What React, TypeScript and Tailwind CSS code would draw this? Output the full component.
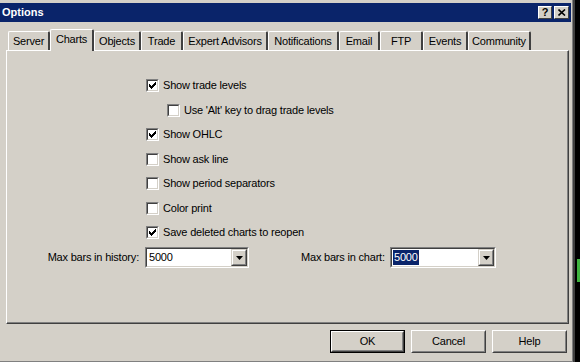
import { useState } from 'react';

const TABS = [
  { label: 'Server', w: 'w-[42px]' },
  { label: 'Charts', w: 'w-[44px]' },
  { label: 'Objects', w: 'w-[47px]' },
  { label: 'Trade', w: 'w-[42px]' },
  { label: 'Expert Advisors', w: 'w-[85px]' },
  { label: 'Notifications', w: 'w-[71px]' },
  { label: 'Email', w: 'w-[41px]' },
  { label: 'FTP', w: 'w-[43px]' },
  { label: 'Events', w: 'w-[45px]' },
  { label: 'Community', w: 'w-[63px]' },
];

const OPTIONS = [
  { id: 'levels', label: 'Show trade levels', checked: true, indent: false },
  { id: 'alt', label: "Use 'Alt' key to drag trade levels", checked: false, indent: true },
  { id: 'ohlc', label: 'Show OHLC', checked: true, indent: false },
  { id: 'ask', label: 'Show ask line', checked: false, indent: false },
  { id: 'sep', label: 'Show period separators', checked: false, indent: false },
  { id: 'color', label: 'Color print', checked: false, indent: false },
  { id: 'save', label: 'Save deleted charts to reopen', checked: true, indent: false },
];

function Checkbox({ checked, onClick }: { checked: boolean; onClick: () => void }) {
  return (
    <button
      onClick={onClick}
      className="w-[13px] h-[13px] shrink-0 border border-t-[#808080] border-l-[#808080] border-b-white border-r-white"
    >
      <div className="w-full h-full bg-white border border-t-[#404040] border-l-[#404040] border-b-[#d4d0c8] border-r-[#d4d0c8] flex items-center justify-center">
        {checked && (
          <svg width="7" height="7" viewBox="0 0 7 7" className="block">
            <path d="M0 2h1v1h1v1h1v-1h1v-1h1v-1h1v-1h1v3h-1v1h-1v1h-1v1h-1v1h-1v-1h-1v-1h-1z" fill="#000" />
          </svg>
        )}
      </div>
    </button>
  );
}

function Combo({ width, selected }: { width: string; selected?: boolean }) {
  return (
    <div className={`${width} h-[21px] border border-t-[#808080] border-l-[#808080] border-b-white border-r-white`}>
      <div className="h-full bg-white border border-t-[#404040] border-l-[#404040] border-b-[#d4d0c8] border-r-[#d4d0c8] flex items-center">
        <div className="flex-1 pl-[1px] flex items-center">
          <span className={`px-[1px] leading-[15px] ${selected ? 'bg-[#0a246a] text-white' : ''}`}>5000</span>
        </div>
        <div className="w-[16px] h-full bg-[#d4d0c8] border border-t-[#d4d0c8] border-l-[#d4d0c8] border-b-[#404040] border-r-[#404040]">
          <div className="w-full h-full border border-t-white border-l-white border-b-[#808080] border-r-[#808080] flex items-center justify-center">
            <svg width="7" height="4" viewBox="0 0 7 4" className="block">
              <path d="M0 0h7L3.5 4z" fill="#000" />
            </svg>
          </div>
        </div>
      </div>
    </div>
  );
}

function DialogButton({ label, isDefault }: { label: string; isDefault?: boolean }) {
  return (
    <div className={`w-[75px] h-[23px] ${isDefault ? 'border border-black' : ''}`}>
      <div className="w-full h-full border border-t-white border-l-white border-b-[#404040] border-r-[#404040]">
        <div className="w-full h-full border border-t-[#d4d0c8] border-l-[#d4d0c8] border-b-[#808080] border-r-[#808080] flex items-center justify-center">
          {label}
        </div>
      </div>
    </div>
  );
}

export default function App() {
  const [checks, setChecks] = useState<Record<string, boolean>>(
    Object.fromEntries(OPTIONS.map((o) => [o.id, o.checked]))
  );
  const [activeTab, setActiveTab] = useState('Charts');

  return (
    <div className="w-[580px] h-[362px] bg-black flex text-[11px] tracking-[-0.2px] text-black overflow-hidden" style={{ fontFamily: '"Liberation Sans", Arial, sans-serif' }}>
      {/* Window */}
      <div className="w-[575px] h-[362px] bg-[#d4d0c8] border-r-2 border-r-[#404040] flex flex-col">
        <div className="h-full border-r border-r-[#808080] border-b border-b-[#808080] pr-[1px] pt-[3px] flex flex-col">
          {/* Title bar */}
          <div className="h-[19px] bg-[#0a246a] flex items-center justify-between pl-[2px] pr-[2px]">
            <span className="text-white font-bold text-[11px] tracking-normal">Options</span>
            <div className="flex items-center gap-[2px]">
              <div className="w-[14px] h-[13px] bg-[#d4d0c8] border border-t-white border-l-white border-b-[#404040] border-r-[#404040] flex items-center justify-center font-bold text-[11px] leading-none">
                ?
              </div>
              <div className="w-[15px] h-[13px] bg-[#d4d0c8] border border-t-white border-l-white border-b-[#404040] border-r-[#404040] flex items-center justify-center">
                <svg width="8" height="7" viewBox="0 0 8 7" className="block">
                  <path d="M0.5 0.5L7 6.5M7 0.5L0.5 6.5" stroke="#000" strokeWidth="1.6" />
                </svg>
              </div>
            </div>
          </div>

          {/* Tabs */}
          <div className="flex items-end pl-[8px] mt-[7px] h-[21px] relative z-10">
            {TABS.map((t) => {
              const active = t.label === activeTab;
              return (
                <button
                  key={t.label}
                  onClick={() => setActiveTab(t.label)}
                  className={`${t.w} shrink-0 bg-[#d4d0c8] border-t border-l border-t-white border-l-white border-r-2 border-r-[#404040] rounded-tl-[2px] rounded-tr-[2px] flex items-start justify-center whitespace-nowrap leading-[13px] pt-[3px] ${
                    active ? 'h-[22px] -mb-[1px]' : 'h-[19px]'
                  }`}
                >
                  {t.label}
                </button>
              );
            })}
          </div>

          {/* Panel */}
          <div className="ml-[6px] w-[563px] h-[274px] border-t border-l border-t-white border-l-white border-b border-r border-b-[#404040] border-r-[#404040]">
            <div className="w-full h-full border-b border-r border-b-[#808080] border-r-[#808080] pt-[28px] flex flex-col">
              <div className="pl-[139px] flex flex-col gap-[11.5px]">
                {OPTIONS.map((o) => (
                  <div key={o.id} className={`h-[13px] flex items-center gap-[4px] ${o.indent ? 'pl-[21px]' : ''}`}>
                    <Checkbox checked={checks[o.id]} onClick={() => setChecks({ ...checks, [o.id]: !checks[o.id] })} />
                    <span className="leading-[13px]">{o.label}</span>
                  </div>
                ))}
              </div>

              <div className="mt-[8px] flex items-center">
                <span className="w-[132px] text-right">Max bars in history:</span>
                <div className="ml-[6px]">
                  <Combo width="w-[104px]" />
                </div>
                <span className="ml-[52px] w-[89px]">Max bars in chart:</span>
                <Combo width="w-[106px]" selected />
              </div>
            </div>
          </div>

          {/* Buttons */}
          <div className="flex justify-end gap-[6px] mt-[6px] pr-[4px]">
            <DialogButton label="OK" isDefault />
            <DialogButton label="Cancel" />
            <DialogButton label="Help" />
          </div>
        </div>
      </div>

      {/* Desktop edge */}
      <div className="w-[5px] pt-[259px] flex justify-end">
        <div className="w-[3px] h-[23px] bg-[#3fb43f]" />
      </div>
    </div>
  );
}
